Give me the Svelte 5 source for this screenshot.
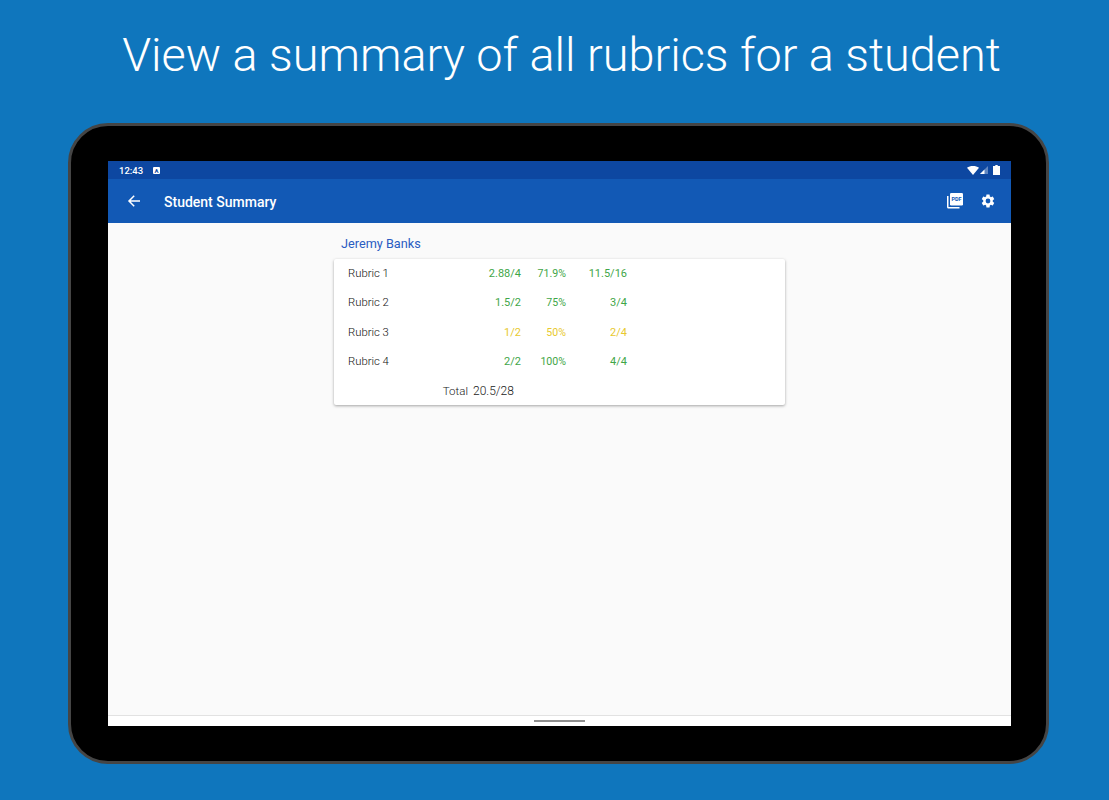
<script>
  const rubrics = [
    { name: 'Rubric 1', score: '2.88/4', percent: '71.9%', points: '11.5/16', level: 'good' },
    { name: 'Rubric 2', score: '1.5/2', percent: '75%', points: '3/4', level: 'good' },
    { name: 'Rubric 3', score: '1/2', percent: '50%', points: '2/4', level: 'warn' },
    { name: 'Rubric 4', score: '2/2', percent: '100%', points: '4/4', level: 'good' }
  ];
</script>

<div class="page">
  <h1>View a summary of all rubrics for a student</h1>

  <div class="tablet">
    <div class="screen">
      <div class="status-bar">
        <span class="time">12:43</span>
        <span class="a-badge">A</span>
        <span class="spacer"></span>
        <svg width="12" height="9" viewBox="0 0 12 9"><path d="M0 1.8C1.6.6 3.700 0 6 0s4.400.6 6 1.800L6 9z" fill="#fff" /></svg>
        <svg class="signal" width="8" height="8" viewBox="0 0 8 8"><path d="M8 0v8H0z" fill="#fff" opacity=".35" /><path d="M4.500 3.500V8H0z" fill="#fff" /></svg>
        <svg class="battery" width="7" height="10" viewBox="0 0 7 10"><path d="M2.300 0h2.400v1H7v9H0V1h2.300z" fill="#fff" /></svg>
      </div>

      <header class="app-bar">
        <svg class="back" width="14" height="14" viewBox="0 0 14 14"><path d="M13 7H2.500M7.200 1.800 2 7l5.200 5.200" fill="none" stroke="#fff" stroke-width="1.500" /></svg>
        <span class="title">Student Summary</span>
        <span class="spacer"></span>
        <svg class="pdf" width="16" height="16" viewBox="0 0 16 16">
          <path d="M0 3h1.500v11h11v1.500H1.500C.6 15.500 0 14.900 0 14z" fill="#fff" />
          <rect x="3" y="0" width="13" height="12.500" rx="1.300" fill="#fff" />
          <text x="9.500" y="8" text-anchor="middle" class="pdf-label">PDF</text>
        </svg>
        <svg class="gear" width="16" height="16" viewBox="0 0 24 24"><path fill="#fff" d="M19.140 12.940c.04-.3.060-.61.060-.94 0-.32-.02-.64-.07-.94l2.030-1.580a.49.49 0 0 0 .12-.61l-1.920-3.320a.49.49 0 0 0-.59-.22l-2.390.96c-.5-.38-1.030-.7-1.620-.94l-.36-2.540a.48.48 0 0 0-.48-.41h-3.840c-.24 0-.43.17-.47.41l-.36 2.540c-.59.24-1.130.57-1.620.94l-2.390-.96a.49.49 0 0 0-.59.22L2.740 8.870c-.12.21-.08.47.12.61l2.030 1.580c-.05.3-.09.63-.09.94s.02.64.07.94l-2.030 1.580a.49.49 0 0 0-.12.61l1.920 3.320c.12.22.37.290.59.220l2.390-.96c.5.380 1.030.7 1.620.94l.36 2.540c.05.240.24.410.48.410h3.840c.24 0 .44-.17.47-.41l.36-2.540c.59-.24 1.130-.56 1.620-.94l2.390.96c.22.080.47 0 .59-.22l1.920-3.320c.12-.22.070-.47-.12-.61zM12 15.600A3.610 3.610 0 0 1 8.400 12 3.610 3.610 0 0 1 12 8.400a3.610 3.610 0 0 1 3.600 3.600 3.610 3.610 0 0 1-3.600 3.600z" /></svg>
      </header>

      <main class="content">
        <div class="column">
          <div class="student">Jeremy Banks</div>
          <div class="card">
            {#each rubrics as rubric}
              <div class="row">
                <span class="name">{rubric.name}</span>
                <span class="num score {rubric.level}">{rubric.score}</span>
                <span class="num percent {rubric.level}">{rubric.percent}</span>
                <span class="num points {rubric.level}">{rubric.points}</span>
              </div>
            {/each}
            <div class="row total">
              <span class="total-label">Total</span>
              <span class="total-value">20.5/28</span>
            </div>
          </div>
        </div>
      </main>

      <footer class="nav-bar">
        <span class="handle"></span>
      </footer>
    </div>
  </div>
</div>

<style>
  :global(body) {
    margin: 0;
    background: #0f76bd;
  }
  .page {
    height: 800px;
    overflow: hidden;
    display: flex;
    flex-direction: column;
    align-items: center;
    font-family: Roboto, "Liberation Sans", sans-serif;
  }
  h1 {
    margin: 25px 0 0 14px;
    height: 98px;
    font-size: 46.8px;
    line-height: 60px;
    font-weight: 300;
    color: #fff;
    white-space: nowrap;
  }
  .tablet {
    box-sizing: border-box;
    flex: none;
    width: 981px;
    height: 641px;
    margin-left: 8px;
    padding: 35px 35px 35px 37px;
    background: #000;
    border: 3px solid #454545;
    border-radius: 40px;
  }
  .screen {
    width: 903px;
    height: 565px;
    display: flex;
    flex-direction: column;
    background: #fafafa;
  }
  .status-bar {
    flex: none;
    height: 18px;
    display: flex;
    align-items: center;
    padding: 0 11px;
    background: #0d47a1;
    color: #fff;
  }
  .time {
    font-size: 9.5px;
    font-weight: 500;
  }
  .a-badge {
    width: 7px;
    height: 7px;
    margin-left: 10px;
    border-radius: 1px;
    background: #fff;
    color: #0d47a1;
    font-size: 6px;
    font-weight: 700;
    line-height: 7px;
    text-align: center;
  }
  .spacer {
    flex: 1;
  }
  .signal {
    margin-left: 1px;
  }
  .battery {
    margin-left: 5px;
  }
  .app-bar {
    flex: none;
    height: 44px;
    display: flex;
    align-items: center;
    background: #1259b5;
    box-sizing: border-box;
    padding: 0 15px 0 19px;
    color: #fff;
  }
  .back {
    margin-top: -1px;
  }
  .title {
    margin: 1px 0 0 23px;
    font-size: 14px;
    font-weight: 500;
  }
  .pdf-label {
    font-size: 5.5px;
    font-weight: 700;
    fill: #1259b5;
    font-family: Roboto, sans-serif;
  }
  .gear {
    margin-left: 17px;
  }
  .content {
    flex: 1;
    display: flex;
    justify-content: center;
  }
  .column {
    width: 451px;
  }
  .student {
    margin: 13px 0 7px 7px;
    font-size: 12.7px;
    line-height: 16px;
    color: #2a5cc2;
  }
  .card {
    height: 146px;
    box-sizing: border-box;
    background: #fff;
    border-radius: 2px;
    box-shadow: 0 1px 3px rgba(0, 0, 0, 0.35);
    font-size: 11px;
  }
  .row {
    display: flex;
    height: 29.3px;
    align-items: center;
    padding-left: 14px;
  }
  .name {
    width: 100px;
    font-size: 11.3px;
    font-weight: 300;
    color: #111;
  }
  .num {
    text-align: right;
  }
  .score {
    width: 73px;
  }
  .percent {
    width: 45px;
    font-size: 10.6px;
  }
  .points {
    width: 61px;
  }
  .good {
    color: #3fa648;
  }
  .warn {
    color: #e8c92e;
  }
  .total {
    color: #222;
  }
  .total-label {
    width: 120px;
    font-size: 11.5px;
    text-align: right;
    font-weight: 300;
  }
  .total-value {
    margin-left: 5px;
    font-size: 12px;
    font-weight: 300;
  }
  .nav-bar {
    flex: none;
    height: 11px;
    box-sizing: border-box;
    display: flex;
    align-items: center;
    justify-content: center;
    background: #fff;
    border-top: 1px solid #e2e2e2;
  }
  .handle {
    width: 51px;
    height: 2px;
    background: #8e8e8e;
  }
</style>
